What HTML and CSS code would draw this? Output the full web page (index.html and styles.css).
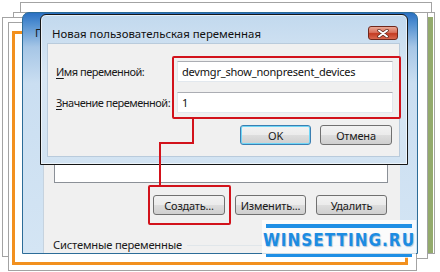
FILE: index.html
```html
<!DOCTYPE html>
<html lang="ru">
<head>
  <meta charset="UTF-8">
  <title>Новая пользовательская переменная</title>
  <link rel="stylesheet" href="styles.css">
</head>
<body>

<div class="scene">
  <div class="sheet s3"></div>
  <div class="sheet s5"></div>
  <div class="green"></div>
  <div class="sheet s4"></div>
  <div class="sheet s1"></div>
  <div class="sheet s2"></div>
  <div class="sheet orange"></div>

  <div class="win back">
    <div class="back-title">Переменные среды</div>
    <div class="back-body">
      <div class="list"></div>
      <div class="btn-row">
        <button class="btn">Создать...</button>
        <button class="btn">Изменить...</button>
        <button class="btn">Удалить</button>
      </div>
      <div class="group"><span>Системные переменные</span><i></i></div>
    </div>
  </div>

  <div class="win dialog">
    <div class="dlg-title">
      <span>Новая пользовательская переменная</span>
      <span class="close">
        <svg width="12" height="9" viewBox="0 0 12 9">
          <path d="M2 1.5l8 6M10 1.5l-8 6" stroke="#5a2418" stroke-width="3.4" stroke-linecap="round"/>
          <path d="M2 1.5l8 6M10 1.5l-8 6" stroke="#fff" stroke-width="2" stroke-linecap="round"/>
        </svg>
      </span>
    </div>
    <div class="dlg-body">
      <div class="field">
        <label><u>И</u>мя переменной:</label>
        <div class="input">devmgr_show_nonpresent_devices</div>
      </div>
      <div class="field">
        <label><u>З</u>начение переменной:</label>
        <div class="input">1</div>
      </div>
      <div class="actions">
        <button class="btn default">OK</button>
        <button class="btn">Отмена</button>
      </div>
    </div>
  </div>

  <div class="mark mark-fields"></div>
  <svg class="wire" width="440" height="272">
    <polyline points="193,118 193,143 160,143 160,186" fill="none" stroke="#d2121b" stroke-width="2"/>
  </svg>
  <div class="mark mark-create"></div>

  <div class="logo">
    <div class="logo-bar"></div>
    <div class="logo-text">WINSETTING.RU</div>
    <div class="logo-bar thin"></div>
  </div>
</div>

</body>
</html>
```

FILE: styles.css
```css
body { margin: 0; background: #fff; font-family: "Noto Sans", "DejaVu Sans", sans-serif; font-size: 11px; letter-spacing: -0.2px; color: #1a1a1a; }
.scene { position: relative; width: 440px; height: 272px; overflow: hidden; }

/* paper stack behind the screenshot */
.sheet { position: absolute; box-sizing: border-box; background: #fff; border: 1px solid #a3a3a3; }
.s3 { left: 20px; top: 2px; width: 412px; height: 40px; }
.s5 { left: 200px; top: 12px; width: 235px; height: 242px; }
.green { position: absolute; left: 428px; top: 17px; width: 5px; height: 236px; background: #93aa6c; }
.s4 { left: 13px; top: 12px; width: 415px; height: 247px; }
.s1 { left: 2px; top: 17px; width: 300px; height: 240px; }
.s2 { left: 8px; top: 22px; width: 409px; height: 249px; }
.orange { left: 12px; top: 31px; width: 396px; height: 234px; border: 3px solid #f2901e; }

/* windows */
.win { position: absolute; box-sizing: border-box; }
.back { left: 22px; top: 12px; width: 396px; height: 242px; border: 1px solid #2c6c98; border-radius: 7px 7px 0 0;
  background: linear-gradient(#2a70c2 0, #4d8dd0 10px, #a6c6e6 34px, #cadef1 70px, #d4e5f4 100%);
  padding: 0 17px 0 20px; display: flex; flex-direction: column; }
.back-title { width: 5px; height: 31px; line-height: 40px; margin-left: -8px; overflow: hidden; white-space: nowrap; color: #1a1a1a; }
.back-body { flex: 1; background: #f0f0f0; border-left: 1px solid #c6d3df; padding: 26px 0 0 0; display: flex; flex-direction: column; }
.list { height: 113px; margin: 0 12px 0 10px; box-sizing: border-box; background: #fff; border: 1px solid #8b9097; }
.btn-row { display: flex; justify-content: flex-end; gap: 10px; margin-top: 12px; padding-right: 13px; }
.group { display: flex; align-items: center; margin-top: 22px; padding-left: 9px; line-height: 15px; white-space: nowrap; font-size: 11.2px; }
.group i { flex: 1; margin: 2px 12px 0 5px; border-top: 1px solid #e0e6ea; }

.btn { box-sizing: border-box; width: 72px; height: 20px; padding: 0; font: inherit; letter-spacing: inherit; color: #1a1a1a;
  border: 1px solid #707070; border-radius: 3px;
  background: linear-gradient(#f2f2f2 0, #ebebeb 50%, #dddddd 51%, #cfcfcf 100%); }
.btn-row .btn:not(:first-child) { width: 71px; }

.dialog { left: 40px; top: 14px; width: 368px; height: 151px; border: 1px solid #151515; border-radius: 6px 6px 0 0;
  background: linear-gradient(#c2d9ee 0, #d9e7f4 40%, #d2e3f2 100%);
  padding: 0 7px 7px 6px; display: flex; flex-direction: column;
  box-shadow: inset 0 0 0 1px rgba(255,255,255,.6); }
.dlg-title { height: 28px; padding: 8px 2px 0 5px; box-sizing: border-box; display: flex; align-items: center; justify-content: space-between; color: #111; font-size: 11.4px; letter-spacing: 0; }
.close { width: 30px; height: 14px; box-sizing: border-box; border: 1px solid #70281c; border-radius: 3px;
  background: linear-gradient(#e9a996 0, #d9715c 45%, #c43b22 55%, #d8684f 100%);
  display: flex; align-items: center; justify-content: center; }
.dlg-body { flex: 1; background: #f0f0f0; border: 1px solid #b9cbdc; padding: 17px 6px 0 8px; display: flex; flex-direction: column; gap: 10px; }
.field { display: flex; align-items: center; justify-content: space-between; white-space: nowrap; }
.field label { letter-spacing: -0.5px; }
.field label u { text-decoration-thickness: 1px; text-underline-offset: 2px; }
.input { box-sizing: border-box; width: 216px; height: 21px; line-height: 19px; padding-left: 4px; background: #fff;
  border: 1px solid #e2e8ee; border-top-color: #abadb3; color: #111; }
.actions { display: flex; justify-content: flex-end; gap: 9px; margin-top: 2px; padding-right: 1px; }
.actions .default { width: 71px; border-color: #3c7fb1; box-shadow: inset 0 0 0 1px #6fd6f7; }

/* red annotations */
.mark { position: absolute; box-sizing: border-box; border: 2px solid #d2121b; border-radius: 2px; }
.mark-fields { left: 172px; top: 56px; width: 229px; height: 63px; }
.mark-create { left: 148px; top: 185px; width: 83px; height: 40px; }
.wire { position: absolute; left: 0; top: 0; }

/* site logo */
.logo { position: absolute; left: 262px; top: 220px; width: 154px; height: 38px; background: rgba(255,255,255,.75);
  display: flex; flex-direction: column; align-items: center; padding-top: 4px; box-sizing: border-box; }
.logo-bar { width: 146px; height: 4px; background: #1f8fe5; }
.logo-bar.thin { height: 3px; margin-top: 4px; }
.logo-text { height: 22px; line-height: 24px; font-family: "DejaVu Sans Condensed", "DejaVu Sans", sans-serif; font-weight: bold;
  font-size: 17px; letter-spacing: 1px; color: #1c8ce2; text-shadow: 1px 1px 1px rgba(20,90,160,.35); }
```
